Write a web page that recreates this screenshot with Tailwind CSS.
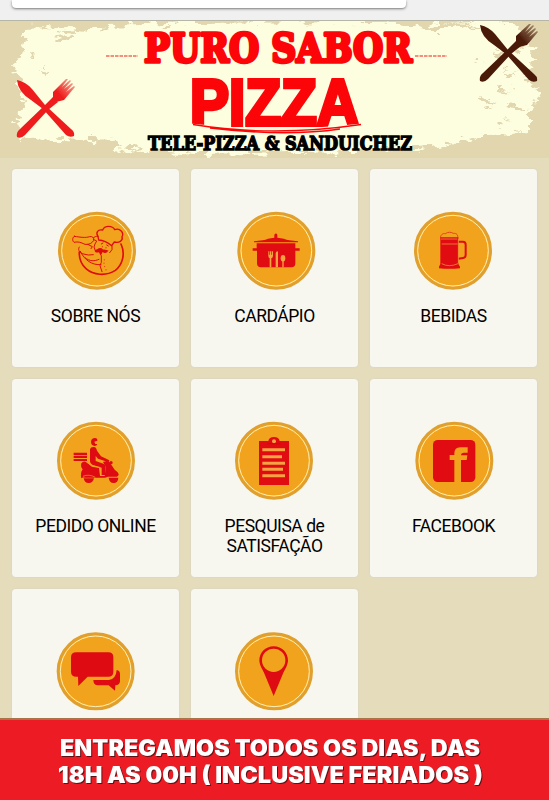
<!DOCTYPE html>
<html lang="pt-BR">
<head>
  <meta charset="UTF-8" />
  <meta name="viewport" content="width=device-width, initial-scale=1.0"/>
  <title>Puro Sabor Pizza</title>
  <script src="https://cdn.jsdelivr.net/npm/@tailwindcss/browser@4"></script>
</head>
<body class="h-screen overflow-hidden flex flex-col bg-[#e5dcbb] text-black font-['Roboto',sans-serif]">

  <!-- Browser bar -->
  <header class="h-[21px] shrink-0 bg-[#f0f0f0] border-b border-[#b5b5a8] pl-3">
    <div class="w-[394px] h-2 bg-white rounded-b shadow-sm shadow-black/40"></div>
  </header>

  <!-- Banner -->
  <svg class="w-full h-[137px] shrink-0 block" viewBox="0 21 549 137">
    <defs>
      <filter id="rough" x="-5%" y="-10%" width="110%" height="120%" color-interpolation-filters="sRGB">
        <feTurbulence type="fractalNoise" baseFrequency="0.07 0.16" numOctaves="4" seed="4"/>
        <feDisplacementMap in="SourceGraphic" scale="20" xChannelSelector="R" yChannelSelector="G"/>
      </filter>
      <linearGradient id="tineRed" x1="0" y1="1" x2="1" y2="0">
        <stop offset=".35" stop-color="#ee1c1c"/><stop offset="1" stop-color="#ee1c1c" stop-opacity=".3"/>
      </linearGradient>
      <linearGradient id="tineBrown" x1="0" y1="1" x2="1" y2="0">
        <stop offset=".35" stop-color="#4a1a08"/><stop offset="1" stop-color="#4a1a08" stop-opacity=".3"/>
      </linearGradient>
    </defs>
    <rect y="21" width="549" height="137" fill="#e2d6ae"/>
    <g filter="url(#rough)">
      <path fill="#fcfedf" d="M24 29L60 28 90 32 110 25 190 22 380 21 425 28 445 22 510 20 528 40 534 60 524 80 541 88 530 110 530 131 490 133 466 141 430 148 400 150 200 154 112 149 120 141 60 139 24 140 16 122 24 95 14 70 22 50z"/>
      <path fill="#e2d6ae" d="M52 35l16-2 10 4-14 5zM30 54l8 1-4 4zM36 67l10 2-6 3zM430 22l45 1-18 5-22 0zM492 50l14 4-9 3zM503 70l16 2-12 4zM494 86l20 3-12 3zM482 98l12 3-10 3zM508 104l18 2-14 4zM496 120l12 2-9 3zM475 60l9 2-6 2zM516 44l9 2-8 4z"/>
    </g>
    <!-- Crossed cutlery -->
    <g fill="#ee1c1c">
      <path d="M17 80q9 2 15 9l13 16 26 24q4 3 3 7-4 2-8-1L43 109l-12-9q-13-8-14-20z"/>
      <path d="M17 137q-1-5 3-8l24-23 9-9 5 5-10 8-23 25q-4 4-8 2z"/>
      <path fill="url(#tineRed)" d="M53 97v-5L66 79l2 0-6 8 8-7 1 1-7 8 8-6 1 1-7 8 8-6 1 1-11 13-8 2-4 2z"/>
    </g>
    <g fill="#4a1a08">
      <path d="M480 25q9 2 15 9l13 16 26 24q4 3 3 7-4 2-8-1L506 54l-12-9q-13-8-14-20z"/>
      <path d="M480 81q-1-5 3-8l24-23 9-9 5 5-10 8-23 25q-4 4-8 2z"/>
      <path fill="url(#tineBrown)" d="M516 41v-5L529 24l2 0-6 8 8-7 1 1-7 8 8-6 1 1-7 8 8-6 1 1-11 13-8 2-4 2z"/>
    </g>
    <path d="M106 56h32M415 56h32" stroke="#f26a5a" stroke-width="1.6" stroke-dasharray="3.5 1"/>
    <g fill="#fb0509" stroke="#fb0509" font-weight="bold">
      <text x="144" y="62" font-family="DejaVu Serif, serif" font-size="40" stroke-width="3.4" stroke-linejoin="round" textLength="268" lengthAdjust="spacingAndGlyphs">PURO SABOR</text>
      <text x="190" y="125" font-family="Liberation Sans, sans-serif" font-size="65" stroke-width="4" textLength="169" lengthAdjust="spacingAndGlyphs">PIZZA</text>
    </g>
    <path d="M190 123.500q84 10 172 0v5q-86 8-172 0z" fill="#fcfedf"/>
    <path d="M193 124.500q80 13 168 0M210 128q75 9 130 1" fill="none" stroke="#fb0509" stroke-width="1.300"/>
    <text x="148" y="149.500" font-family="DejaVu Serif, serif" font-weight="bold" font-size="18" stroke="#000" stroke-width="1.400" textLength="264" lengthAdjust="spacingAndGlyphs">TELE-PIZZA &amp; SANDUICHEZ</text>
  </svg>

  <!-- Menu -->
  <main class="flex-1 min-h-0 overflow-hidden px-3 pt-[10.5px]">
    <div class="grid grid-cols-3 auto-rows-[198px] gap-3 text-center text-[17.500px] leading-5 tracking-[-0.45px]">

      <a class="flex flex-col items-center pt-9 bg-[#f8f7ef] rounded shadow-[0_0_2px_#cfcfcf]">
        <svg class="w-[95px] h-[90px] shrink-0" viewBox="-6 0 285 270" fill="none">
          <circle cx="141" cy="137" r="113" fill="#f2a31d" stroke="#dfa02f" stroke-width="8"/>
          <circle cx="141" cy="137" r="106" stroke="#fff0b5" stroke-width="3"/>
          <g stroke="#de0b0f" stroke-linecap="round" stroke-linejoin="round">
            <path stroke-width="4" d="M144 94c-8-12 0-22 14-19 6-14 29-14 36-1 16-6 29 9 22 21 4 12-9 20-23 16l-8 11c-12-10-23-16-39-17z"/>
            <path stroke-width="5" d="M213 117c14 30 4 63-17 79-28 18-66 15-88-5-14-13-21-32-20-50"/>
            <path stroke-width="3" d="M144 94c-7-1-11 2-14 5M73 94c-7 4-6 14-1 18 12-3 20 0 33 6 12 2 22-4 26-12 1-9-5-13-12-11-13 4-25 2-46-1zM88 126c-5 7-1 15 8 20l19 4 15-1M91 139c13 27 35 42 62 40M105 158c15 12 28 11 42 5M113 118l14 7-4 6M130 103l10 5-5 9-3 9 3 8M154 152v20l-4 10 6 18M186 123v11l-7 9M154 117l5-3M170 120l5 3"/>
            <path stroke-width="2" d="M163 164v1M162 174v1M164 184v1M168 194v1M157 124v2M168 127v2"/>
          </g>
          <path fill="#de0b0f" d="M134 134c5 3 9-5 17-5 5 0 6 3 8 5 8-2 13 4 17 2-4 8-12 10-18 5l-6 11-5-10c-8 2-14-1-13-8z"/>
        </svg>
        <span class="mt-[11px]">SOBRE NÓS</span>
      </a>

      <a class="flex flex-col items-center pt-9 bg-[#f8f7ef] rounded shadow-[0_0_2px_#cfcfcf]">
        <svg class="w-[95px] h-[90px] shrink-0" viewBox="-3 0 285 270" fill="none">
          <circle cx="145" cy="137" r="113" fill="#f2a31d" stroke="#dfa02f" stroke-width="8"/>
          <circle cx="145" cy="137" r="106" stroke="#fff0b5" stroke-width="3"/>
          <path fill="#e10b12" d="M139 98v-9q5-7 9 0v9c16 1 24 5 36 8l26 3v3H78v-3l26-3c12-3 20-7 35-8z"/>
          <path fill="#e10b12" d="M86 115h116v15h13v7h-13v38q0 12-12 12H99q-12 0-12-12v-38H74v-7h12z"/>
          <g fill="#f5a443">
            <path d="M121 139h3v10h2v-10h3v10h2v-10h4v13q0 6-5 8v27h-5v-27q-4-2-4-8zM143 187v-42q0-6 7-6v48z"/>
            <ellipse cx="165" cy="160" rx="7" ry="10"/>
            <path d="M163 166h4v21h-4z"/>
          </g>
        </svg>
        <span class="mt-[11px]">CARDÁPIO</span>
      </a>

      <a class="flex flex-col items-center pt-9 bg-[#f8f7ef] rounded shadow-[0_0_2px_#cfcfcf]">
        <svg class="w-[95px] h-[90px] shrink-0" viewBox="0 0 285 270" fill="none">
          <circle cx="141" cy="137" r="113" fill="#f2a31d" stroke="#dfa02f" stroke-width="8"/>
          <circle cx="141" cy="137" r="106" stroke="#fff0b5" stroke-width="3"/>
          <path stroke="#e0301a" stroke-width="2.500" d="M104 100c-2-9 6-16 14-14 8-6 18-5 24-1 10-1 15 5 13 16"/>
          <path fill="#e10b12" d="M103 97h54v80l5 8v5q-31 3-63 0v-5l4-8z"/>
          <path stroke="#e10b12" stroke-width="6" d="M157 110h14q8 0 8 9v31q0 8-8 9l-14 2"/>
          <path stroke="#f5a443" stroke-width="2" d="M105 102h49M107 117h48M107 176q22 12 49 0M157 102v72"/>
        </svg>
        <span class="mt-[11px]">BEBIDAS</span>
      </a>

      <a class="flex flex-col items-center pt-9 bg-[#f8f7ef] rounded shadow-[0_0_2px_#cfcfcf]">
        <svg class="w-[95px] h-[90px] shrink-0" viewBox="-6 0 285 270" fill="none">
          <circle cx="138" cy="137" r="113" fill="#f2a31d" stroke="#dfa02f" stroke-width="8"/>
          <circle cx="138" cy="137" r="106" stroke="#fff0b5" stroke-width="3"/>
          <g fill="#de0b12">
            <path d="M71 113h40v7H71zM71 122h40v7H71zM71 132h40v6H71z"/>
            <path d="M123 80q1-11 12-11 8 1 7 8l-9 3 3 7h6q-2 6-8 6-11-2-11-13z"/>
            <path d="M120 103q2-8 12-7 7 1 9 11l12 17 25 12-2 6-32-11-7-8v15l25 9q6 2 5 9l-1 24h-11v-22l-28-9q-8-4-7-14z"/>
            <path d="M94 145q4-6 12-5l9 6 11 9 21 4 3 24h14l4-27-9-15 11-3 9 4 15 22q13 9 12 16l-5 5h-27l-9 3h-59q-9-2-12 2-4-16 4-27-7-7-4-18z"/>
            <path d="M101 190h31q-3 14-16 14t-15-14zM176 188h29q-1 16-14 16t-15-16z"/>
            <circle cx="183" cy="143" r="5"/>
          </g>
          <path stroke="#f2a31d" stroke-width="2" d="M99 184q18-8 37 3M112 143l14 10 24 4"/>
        </svg>
        <span class="mt-[11px]">PEDIDO ONLINE</span>
      </a>

      <a class="flex flex-col items-center pt-9 bg-[#f8f7ef] rounded shadow-[0_0_2px_#cfcfcf]">
        <svg class="w-[95px] h-[90px] shrink-0" viewBox="-3 0 285 270" fill="none">
          <circle cx="138" cy="137" r="113" fill="#f2a31d" stroke="#dfa02f" stroke-width="8"/>
          <circle cx="138" cy="137" r="106" stroke="#fff0b5" stroke-width="3"/>
          <path fill="#e10b12" d="M93 78h28q2-12 17-12t17 12h28v132H93z"/>
          <circle cx="138" cy="79" r="6" fill="#f5a443"/>
          <path stroke="#c91008" stroke-width="3" d="M118 86h40"/>
          <path stroke="#f5a443" stroke-width="9" d="M103 104h68M103 125h59M103 145h68M103 163h62M103 182h68"/>
        </svg>
        <span class="mt-[11px]">PESQUISA de<br>SATISFAÇÃO</span>
      </a>

      <a class="flex flex-col items-center pt-9 bg-[#f8f7ef] rounded shadow-[0_0_2px_#cfcfcf]">
        <svg class="w-[95px] h-[90px] shrink-0" viewBox="0 0 285 270" fill="none">
          <circle cx="145" cy="137" r="113" fill="#f2a31d" stroke="#dfa02f" stroke-width="8"/>
          <circle cx="145" cy="137" r="106" stroke="#fff0b5" stroke-width="3"/>
          <rect x="81" y="75" width="127" height="126" rx="14" fill="#e10b12"/>
          <path fill="#f2a31d" d="M145 202v-67h-14v-15h14v-5q0-18 18-18h22v16h-11q-9 0-9 8h19l-2 14h-17v67z"/>
        </svg>
        <span class="mt-[11px]">FACEBOOK</span>
      </a>

      <a class="flex flex-col items-center pt-9 bg-[#f8f7ef] rounded shadow-[0_0_2px_#cfcfcf]">
        <svg class="w-[95px] h-[90px] shrink-0" viewBox="-6 0 285 270" fill="none">
          <circle cx="137" cy="139" r="113" fill="#f2a31d" stroke="#dfa02f" stroke-width="8"/>
          <circle cx="137" cy="139" r="106" stroke="#fff0b5" stroke-width="3"/>
          <g fill="#de0b12">
            <path d="M79 82h96q15 0 15 15v43q0 15-15 15h-62l-28 28-1-28h-5q-16 0-16-15V97q0-15 16-15z"/>
            <path d="M200 135q10 2 10 12v20q0 13-14 14l-1 16-19-16h-34q-12-1-12-16h47q21-3 23-30z"/>
          </g>
        </svg>
      </a>

      <a class="flex flex-col items-center pt-9 bg-[#f8f7ef] rounded shadow-[0_0_2px_#cfcfcf]">
        <svg class="w-[95px] h-[90px] shrink-0" viewBox="-3 0 285 270" fill="none">
          <circle cx="138" cy="139" r="113" fill="#f2a31d" stroke="#dfa02f" stroke-width="8"/>
          <circle cx="138" cy="139" r="106" stroke="#fff0b5" stroke-width="3"/>
          <path fill="#de0b12" d="M137 64c25 0 44 20 43 44-1 13-8 23-14 35l-29 70-29-70c-6-12-13-22-14-35-1-24 18-44 43-44z"/>
          <circle cx="137" cy="106" r="35" fill="#f2a31d"/>
        </svg>
      </a>

    </div>
  </main>

  <!-- Delivery notice -->
  <footer class="h-[82px] shrink-0 bg-[#ed1c24] border-t-2 border-[#a8744a]">
    <svg class="w-full h-20 block [filter:drop-shadow(1.5px_1.5px_0.5px_#5c1215)]" viewBox="0 720 549 80" font-family="Inter, sans-serif" font-weight="900" font-size="22.500" fill="#fff">
      <text x="60" y="755.500" textLength="420" lengthAdjust="spacingAndGlyphs">ENTREGAMOS TODOS OS DIAS, DAS</text>
      <text x="58" y="782.500" textLength="425" lengthAdjust="spacingAndGlyphs">18H AS 00H ( INCLUSIVE FERIADOS )</text>
    </svg>
  </footer>

</body>
</html>
